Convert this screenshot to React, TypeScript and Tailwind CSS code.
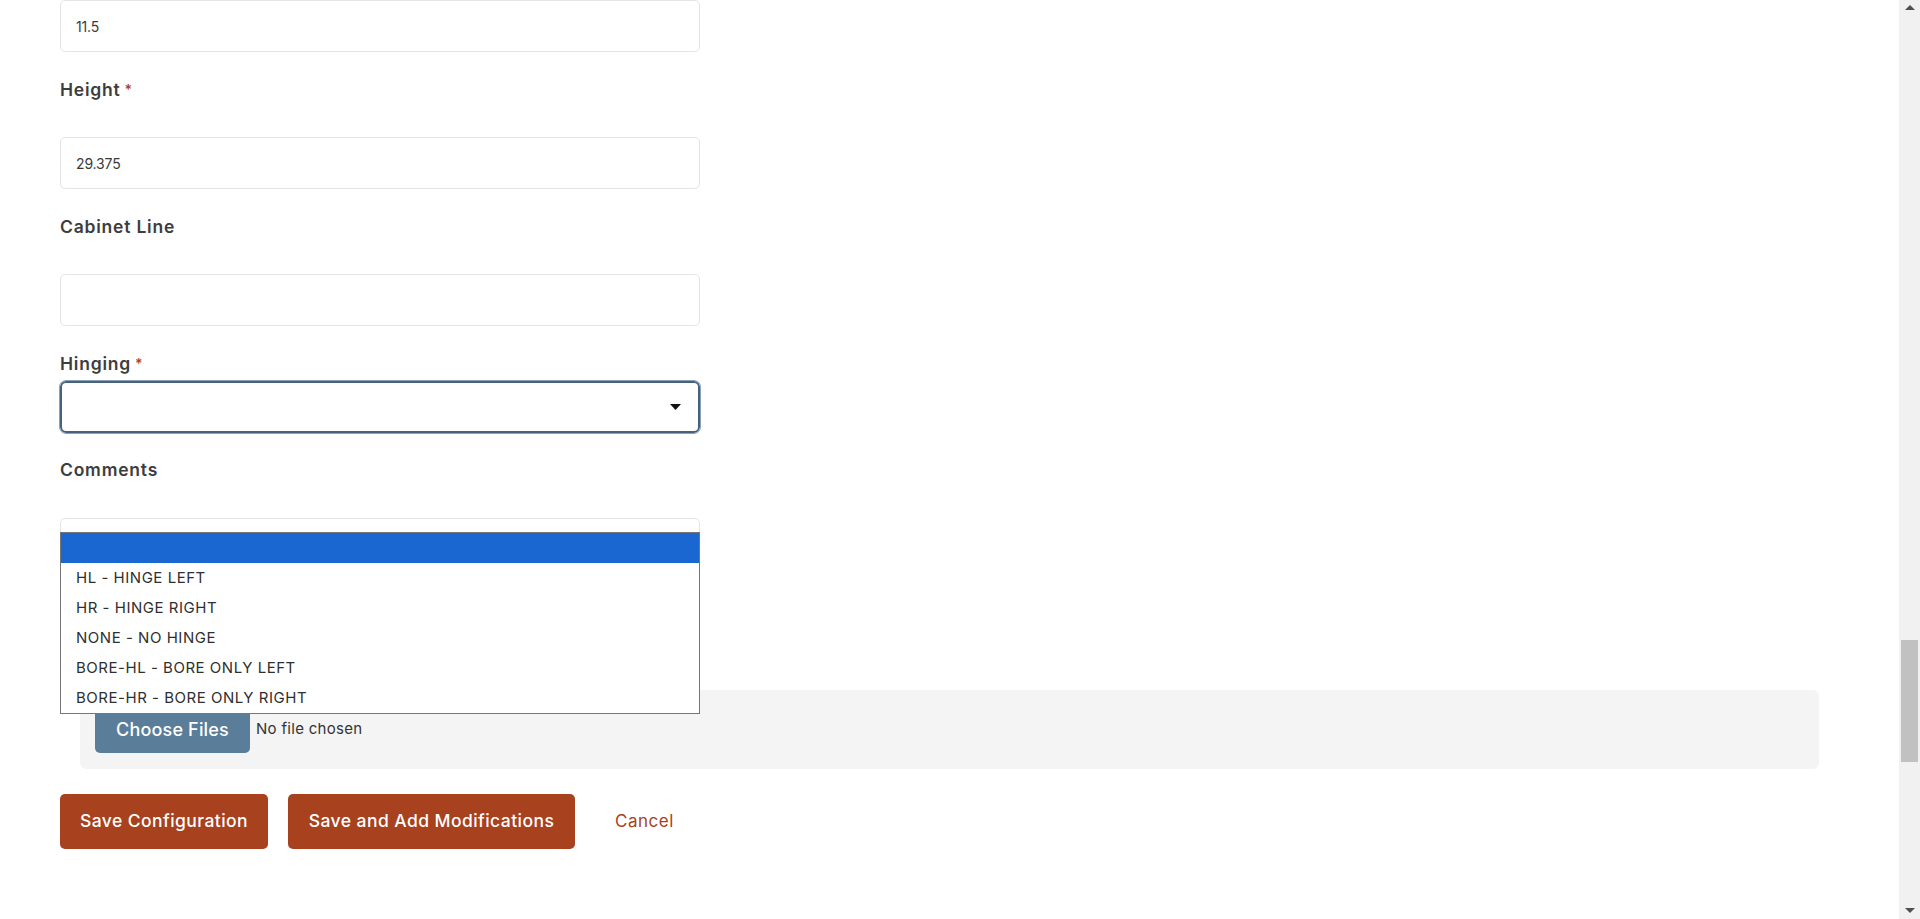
import React from "react";

const font = { fontFamily: "Inter, 'Open Sans', Arial, sans-serif" };

function Label({ text, required, className = "" }: { text: string; required?: boolean; className?: string }) {
  return (
    <div className={`h-6 leading-6 text-[17.5px] font-semibold tracking-[0.045em] text-[#3d3d3d] ${className}`}>
      {text}
      {required && <span className="ml-1 text-[#b0432a] text-[14px] align-top">*</span>}
    </div>
  );
}

function TextField({ value, className = "" }: { value?: string; className?: string }) {
  return (
    <div
      className={`w-[640px] h-[52px] rounded-[5px] border border-[#e4e4e4] bg-white flex items-center pl-[15px] text-[14px] tracking-[-0.01em] text-[#3a3a3a] ${className}`}
    >
      {value}
    </div>
  );
}

const options = [
  "HL - HINGE LEFT",
  "HR - HINGE RIGHT",
  "NONE - NO HINGE",
  "BORE-HL - BORE ONLY LEFT",
  "BORE-HR - BORE ONLY RIGHT",
];

function Scrollbar() {
  return (
    <div className="w-[21px] h-full bg-[#f1f1f1] flex flex-col items-center">
      <div className="mt-[5px] w-0 h-0 border-l-[5px] border-r-[5px] border-b-[5px] border-l-transparent border-r-transparent border-b-[#505050]" />
      <div className="mt-[630px] w-[17px] h-[122px] bg-[#c1c1c1]" />
      <div className="mt-auto mb-[6px] w-0 h-0 border-l-[5px] border-r-[5px] border-t-[5px] border-l-transparent border-r-transparent border-t-[#505050]" />
    </div>
  );
}

export default function App() {
  return (
    <div className="w-[1920px] h-[919px] overflow-hidden flex bg-white" style={font}>
      <main className="flex-1 flex flex-col pl-[60px]">
        <TextField value="11.5" />
        <Label text="Height" required className="mt-[26px]" />
        <TextField value="29.375" className="mt-[35px]" />
        <Label text="Cabinet Line" className="mt-[26px]" />
        <TextField className="mt-[35px]" />
        <Label text="Hinging" required className="mt-[26px]" />
        <div className="mt-[5px] w-[640px] h-[52px] rounded-[6px] border-2 border-[#46627f] outline-1 outline-[#8aa1b6] bg-white flex items-center justify-end pr-[17px]">
          <svg width="11" height="6" viewBox="0 0 11 6">
            <path d="M0 0 H11 L5.5 6 Z" fill="#111" />
          </svg>
        </div>
        <Label text="Comments" className="mt-[25px]" />
        <div className="relative mt-[36px] w-[640px]">
          <div className="h-[130px] rounded-[5px] border border-[#e4e4e4] bg-white" />
          <div className="absolute left-0 top-[14px] w-[640px] border border-[#767676] bg-white text-[15px] tracking-[0.035em] text-[#2f2f2f]">
            <div className="h-[30px] bg-[#1a67d2]" />
            {options.map((o) => (
              <div key={o} className="h-[30px] flex items-center pl-[15px] pt-[1px]">
                {o}
              </div>
            ))}
          </div>
        </div>
        <div className="mt-[42px] ml-[20px] mr-[80px] h-[79px] rounded-[6px] bg-[#f4f4f4] pl-[15px] pt-[15px] flex items-start">
          <div className="w-[155px] h-[48px] rounded-[5px] bg-[#5a7d99] text-white text-[18px] font-medium tracking-[0.01em] flex items-center justify-center">
            Choose Files
          </div>
          <div className="ml-[6px] h-[48px] flex items-center text-[15px] tracking-[0.02em] text-[#333]">No file chosen</div>
        </div>
        <div className="mt-[25px] flex items-center">
          <div className="h-[55px] w-[208px] rounded-[5px] bg-[#a8411e] text-white text-[17.5px] font-medium tracking-[0.025em] flex items-center justify-center">
            Save Configuration
          </div>
          <div className="ml-[20px] h-[55px] w-[287px] rounded-[5px] bg-[#a8411e] text-white text-[17.5px] font-medium tracking-[0.025em] flex items-center justify-center">
            Save and Add Modifications
          </div>
          <div className="ml-[40px] text-[17px] tracking-[0.03em] text-[#a8411e]">Cancel</div>
        </div>
      </main>
      <Scrollbar />
    </div>
  );
}
